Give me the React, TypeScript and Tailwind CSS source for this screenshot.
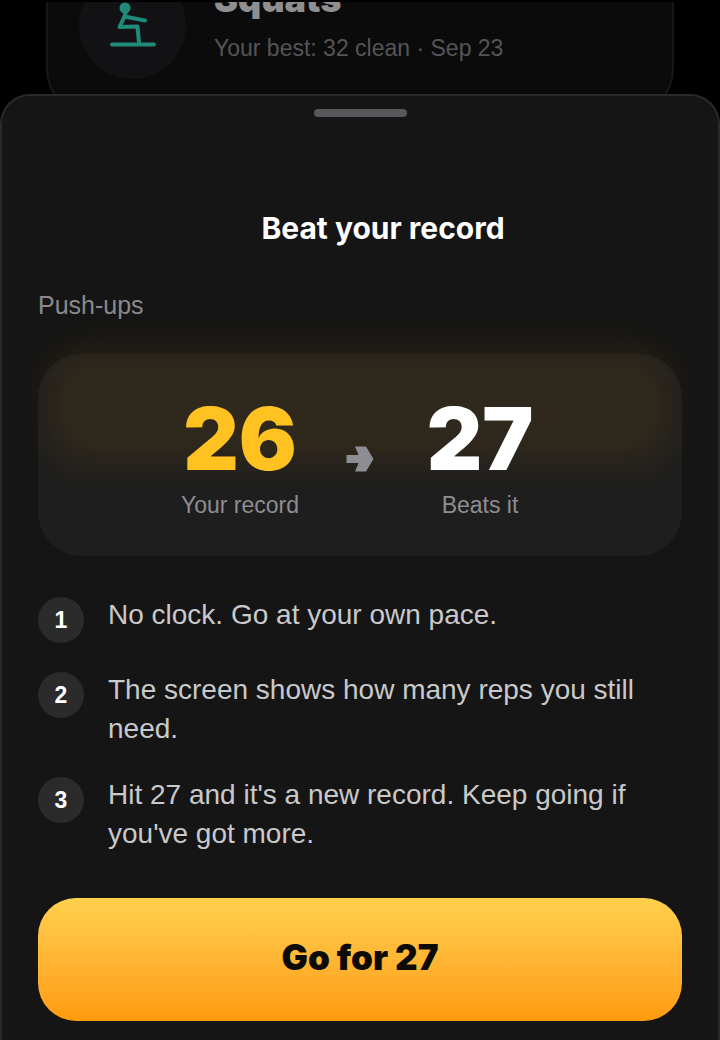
import React from "react";

interface StatProps {
  value: number;
  label: string;
  highlight?: boolean;
}

const steps = [
  "No clock. Go at your own pace.",
  "The screen shows how many reps you still need.",
  "Hit 27 and it's a new record. Keep going if you've got more.",
];

const SquatIcon = () => (
  <svg
    width="48"
    height="48"
    viewBox="0 0 48 48"
    fill="none"
    stroke="#1f8a78"
    strokeWidth="4"
    strokeLinecap="round"
    strokeLinejoin="round"
    aria-hidden="true"
  >
    <circle cx="16" cy="6" r="5.5" fill="#1f8a78" stroke="none" />
    <path d="M17 9 15.500 14.500 36 18.500" />
    <path d="M15.500 14.500 10.500 25 28.500 24.500 30 41" />
    <path d="M3 42.500H45" />
  </svg>
);

const ArrowIcon = () => (
  <svg width="28" height="26" viewBox="0 0 28 26" fill="#8e8d93" aria-hidden="true">
    <path d="M0.500 9H12.500L9 0.500H20L27.500 13L20 25.500H9L12.500 17H0.500Z" />
  </svg>
);

// Number with its caption below
const Stat: React.FC<StatProps> = ({ value, label, highlight = false }) => (
  <div className="flex w-[122px] flex-col items-center">
    <span
      className={`font-['Inter',sans-serif] text-[86px] leading-[84px] font-black ${
        highlight ? "text-[#ffc220]" : "text-white"
      }`}
    >
      {value}
    </span>
    <span className="mt-2 text-[23px] leading-8 text-[#8e8d91]">{label}</span>
  </div>
);

// Exercise card dimmed behind the sheet
const ExerciseCard = () => (
  <div className="mx-[46px] flex h-28 items-end gap-7 overflow-hidden rounded-b-[44px] border-x-2 border-b-2 border-[#171718] bg-[#0b0b0b] pb-[33px] pl-[31px]">
    <div className="flex size-[107px] shrink-0 items-center justify-center rounded-full bg-[#121214]">
      <SquatIcon />
    </div>
    <div className="flex flex-col pb-[15px]">
      <h2 className="font-['Inter',sans-serif] text-[36px] leading-[42px] font-black text-[#8f8f8f]">
        Squats
      </h2>
      <p className="mt-3 text-[23px] leading-8 text-[#555557]">
        Your best: 32 clean · Sep 23
      </p>
    </div>
  </div>
);

export default function App() {
  return (
    <div className="flex min-h-screen flex-col bg-black pt-0.5 font-['Liberation_Sans',Arial,sans-serif]">
      <ExerciseCard />

      <main className="relative -mt-5 flex flex-1 flex-col rounded-t-[30px] border-x-2 border-t-2 border-[#2a2a2c] bg-[#151515] px-9 pt-[13px] pb-5">
        <div className="mx-auto h-2 w-[93px] rounded-full bg-[#57575c]" />

        <h1 className="mt-[91px] pl-[46px] text-center font-['Inter',sans-serif] text-[30px] leading-10 font-bold text-white">
          Beat your record
        </h1>
        <p className="mt-10 text-[25px] leading-[34px] text-[#8a898d]">Push-ups</p>

        <section className="relative mt-8">
          <div className="absolute inset-x-2 -top-2 h-[120px] rounded-[40px] bg-[#ffa800]/8 blur-[16px]" />
          <div className="relative flex h-[202px] items-center justify-center gap-[45px] rounded-[44px] bg-white/4 pt-2">
            <Stat value={26} label="Your record" highlight />
            <ArrowIcon />
            <Stat value={27} label="Beats it" />
          </div>
        </section>

        <ol className="mt-[39px] flex flex-col gap-[27px]">
          {steps.map((step, i) => (
            <li key={step} className="flex items-start gap-6">
              <span className="mt-0.5 flex size-[46px] shrink-0 items-center justify-center rounded-full bg-[#2b2b2b] text-[23px] font-bold text-white">
                {i + 1}
              </span>
              <p className="text-[28px] leading-[39px] text-[#c9c9cb]">{step}</p>
            </li>
          ))}
        </ol>

        <button
          type="button"
          className="mt-[45px] h-[123px] w-full rounded-[38px] bg-linear-to-b from-[#ffd04d] to-[#ff9b0b] pb-1 font-['Inter',sans-serif] text-[35px] font-black text-[#0c0b08]"
        >
          Go for 27
        </button>
      </main>
    </div>
  );
}
